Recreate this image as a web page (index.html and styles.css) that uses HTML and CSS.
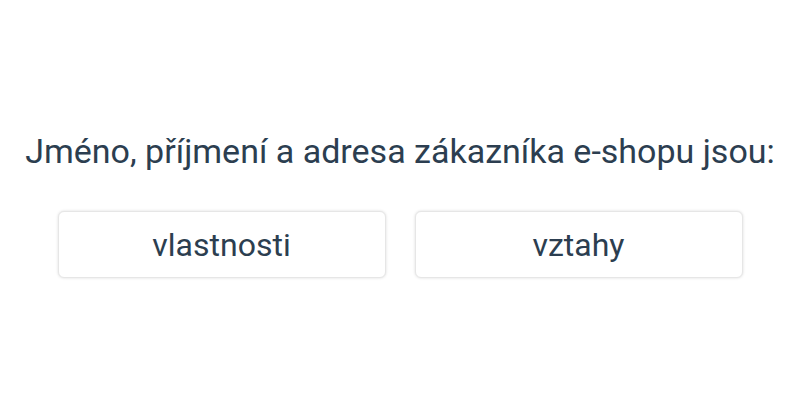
FILE: index.html
```html
<!DOCTYPE html>
<html lang="cs">
<head>
<meta charset="utf-8">
<link rel="stylesheet" href="styles.css">
</head>
<body>
<main class="quiz">
  <h1 class="question">Jméno, příjmení a adresa zákazníka e-shopu jsou:</h1>
  <div class="options">
    <button class="option">vlastnosti</button>
    <button class="option">vztahy</button>
  </div>
</main>
</body>
</html>
```

FILE: styles.css
```css
html, body {
  margin: 0;
  padding: 0;
  background: #ffffff;
}
body {
  width: 800px;
  height: 400px;
  font-family: Roboto, "Liberation Sans", sans-serif;
  color: #2c3e50;
}
.quiz {
  display: flex;
  flex-direction: column;
  align-items: center;
  padding-top: 128px;
}
.question {
  margin: 0;
  font-size: 34px;
  font-weight: 400;
  line-height: 46px;
  text-align: center;
  white-space: nowrap;
}
.options {
  display: flex;
  gap: 29px;
  margin-top: 37px;
}
.option {
  width: 328px;
  height: 67px;
  background: #ffffff;
  border: 1px solid #e6e6e6;
  border-radius: 6px;
  box-shadow: 0 0 3px rgba(0,0,0,0.14);
  font-family: Roboto, "Liberation Sans", sans-serif;
  font-size: 32px;
  color: #2c3e50;
  padding: 0;
}
```
